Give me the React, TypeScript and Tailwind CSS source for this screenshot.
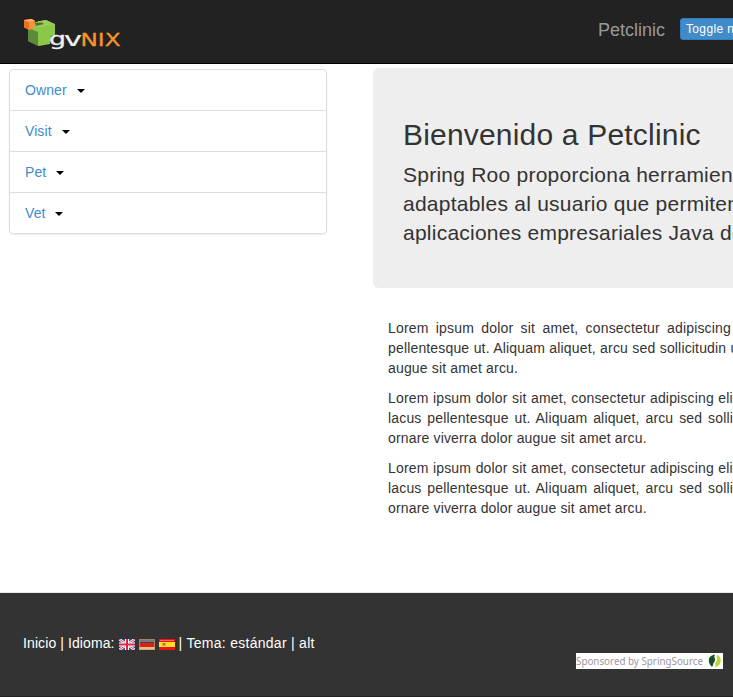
import type { ReactNode } from "react";

function Logo() {
  return (
    <svg className="shrink-0" width="100" height="34" viewBox="22 17 100 34" role="img" aria-label="gvNIX">
      <path d="M28 27 L36 22 L46 20 L55 24 V35 L51 36 L50 44 L39 46 L28 41 Z" fill="#8cc848" />
      <path d="M28 28 L38 32 V46 L28 41 Z" fill="#5a8a3a" />
      <path d="M37 21.5 L46 20 L55 24.5 L38 27.5 L33 25 L42 24 Z" fill="#9ccc58" />
      <path d="M35 23 L42 22.5 L44 24 L36 26 Z" fill="#4a7530" />
      <path d="M24 20 L32 19 L35 21 L34.5 28 L29 30 L24 27 Z" fill="#f7933a" />
      <path d="M24 20.5 L29 22 V30 L24 27.5 Z" fill="#e0752a" />
      <path d="M24 20 L31 19 L35 20.5 L29 22 Z" fill="#ffad62" />
      <g fontFamily="'DejaVu Sans', sans-serif" letterSpacing="0">
        <text x="49" y="45.3" fontSize="17.5" fill="#f0f0f0" stroke="#f0f0f0" strokeWidth=".3" textLength="17" lengthAdjust="spacingAndGlyphs">g</text>
        <text x="64" y="46" fontSize="19" fill="#f0f0f0" stroke="#f0f0f0" strokeWidth=".2" textLength="18" lengthAdjust="spacingAndGlyphs">v</text>
        <text x="80.5" y="46" fontSize="17.5" fill="#f7942e" stroke="#f7942e" strokeWidth=".3" textLength="40" lengthAdjust="spacingAndGlyphs">NIX</text>
      </g>
    </svg>
  );
}

function MenuItem({ label }: { label: string }) {
  return (
    <li className="flex h-[41px] items-center border-b border-[#ddd] pl-[15px] last:h-10 last:border-b-0">
      <a className="tracking-[0.08px] text-[#428bca]">{label}</a>
      <span className="mt-[2px] ml-[10px] border-x-4 border-t-4 border-x-transparent border-t-black" />
    </li>
  );
}

function UkFlag() {
  return (
    <svg width="16" height="11" viewBox="0 0 16 11">
      <rect width="16" height="11" fill="#1d4fa3" />
      <path d="M0 0L16 11M16 0L0 11" stroke="#fff" strokeWidth="2.6" />
      <path d="M0 0L16 11M16 0L0 11" stroke="#e2394c" strokeWidth="1" />
      <path d="M8 0V11M0 5.5H16" stroke="#fff" strokeWidth="4" />
      <path d="M8 0V11M0 5.5H16" stroke="#e0243a" strokeWidth="2" />
    </svg>
  );
}

function DeFlag() {
  return (
    <svg width="16" height="11" viewBox="0 0 16 11">
      <rect width="16" height="4" fill="#444" />
      <rect x="1" y="1" width="14" height="2" fill="#777" />
      <rect y="4" width="16" height="4" fill="#e01d1d" />
      <rect y="8" width="16" height="3" fill="#e3c478" />
      <rect x=".5" y=".5" width="15" height="10" fill="none" stroke="#b9a473" strokeOpacity=".7" />
    </svg>
  );
}

function EsFlag() {
  return (
    <svg width="16" height="11" viewBox="0 0 16 11">
      <rect width="16" height="11" fill="#e8131b" />
      <rect x="1" y="1" width="14" height="1" fill="#f66" />
      <rect y="3" width="16" height="5" fill="#fce11b" />
      <rect x="3" y="4" width="4" height="3" fill="#dba858" />
      <rect x="4" y="4" width="2" height="2" fill="#e75a35" />
    </svg>
  );
}

function Line({ spacing, children }: { spacing?: string; children: ReactNode }) {
  return <span className={`block whitespace-nowrap ${spacing ?? ""}`}>{children}</span>;
}

export default function App() {
  return (
    <div className="flex h-[697px] w-[733px] flex-col overflow-hidden bg-white font-['Liberation_Sans',Arial,sans-serif] text-[14px] leading-[20px] tracking-[0.16px] text-[#333]">
      <header className="flex h-16 shrink-0 border-b border-black bg-[#222] pt-[17px] pl-[22px]">
        <Logo />
        <span className="mt-[3px] ml-[476px] w-[82px] shrink-0 text-[18px] tracking-normal text-[#999]">Petclinic</span>
        <button className="mt-px h-[22px] shrink-0 rounded-[3px] border border-[#357ebd] bg-[#428bca] px-[5px] text-left text-[12px] leading-[18px] tracking-[0.35px] whitespace-nowrap text-white">
          Toggle navigation
        </button>
      </header>
      <div className="flex h-[528px] shrink-0">
        <ul className="mt-[5px] ml-[9px] h-[165px] w-[318px] shrink-0 rounded-[4px] border border-[#ddd] shadow-[0_1px_2px_rgba(0,0,0,0.075)]">
          <MenuItem label="Owner" />
          <MenuItem label="Visit" />
          <MenuItem label="Pet" />
          <MenuItem label="Vet" />
        </ul>
        <main className="ml-[46px] shrink-0">
          <section className="mt-1 h-[220px] w-[700px] rounded-[6px] bg-[#eee] pt-[50px] pl-[30px]">
            <h2 className="text-[30px] leading-[33px] tracking-[0.19px]">Bienvenido a Petclinic</h2>
            <p className="mt-[9px] text-[21px] leading-[29px] tracking-[0.24px]">
              <Line>Spring Roo proporciona herramientas</Line>
              <Line>adaptables al usuario que permiten</Line>
              <Line>aplicaciones empresariales Java de</Line>
            </p>
          </section>
          <section className="mt-[30px] flex flex-col gap-[10px] pl-[15px]">
            <p>
              <Line spacing="[word-spacing:3.3px]">Lorem ipsum dolor sit amet, consectetur adipiscing</Line>
              <Line spacing="[word-spacing:0.3px]">pellentesque ut. Aliquam aliquet, arcu sed sollicitudin ut</Line>
              <Line>augue sit amet arcu.</Line>
            </p>
            <p>
              <Line spacing="[word-spacing:0.45px]">Lorem ipsum dolor sit amet, consectetur adipiscing elit.</Line>
              <Line spacing="[word-spacing:1.8px]">lacus pellentesque ut. Aliquam aliquet, arcu sed sollicitudin</Line>
              <Line>ornare viverra dolor augue sit amet arcu.</Line>
            </p>
            <p>
              <Line spacing="[word-spacing:0.45px]">Lorem ipsum dolor sit amet, consectetur adipiscing elit.</Line>
              <Line spacing="[word-spacing:1.8px]">lacus pellentesque ut. Aliquam aliquet, arcu sed sollicitudin</Line>
              <Line>ornare viverra dolor augue sit amet arcu.</Line>
            </p>
          </section>
        </main>
      </div>
      <footer className="flex h-[105px] shrink-0 justify-between border-t border-[#e7e7e7] border-b border-b-[#222] bg-[#333] pr-[10px] pl-[23px] text-white">
        <div className="mt-[40px] flex h-5 items-center whitespace-pre">
          <span className="tracking-[0.1px]">Inicio | Idioma: </span>
          <span className="mt-[3px] mr-1 flex gap-1"><UkFlag /><DeFlag /><EsFlag /></span>
          <span className="tracking-[0.28px]">| Tema: estándar | alt</span>
        </div>
        <div className="mt-[60px] flex h-4 w-[147px] items-center justify-between bg-white pr-px">
          <svg width="132" height="16">
            <text x="0" y="12" fontSize="11" fill="#9c969c" letterSpacing="0" fontFamily="'Noto Sans', sans-serif" textLength="127" lengthAdjust="spacingAndGlyphs">Sponsored by SpringSource</text>
          </svg>
          <svg width="14" height="14" viewBox="0 0 14 14">
            <path d="M7.5 0.5 C0 1 -1 8 3.5 12.5 C4 12.8 5 12.5 5 11 C5 8.5 7.5 8 7 5 C6.5 3 5.5 2.5 7.5 0.5 Z" fill="#145220" />
            <path d="M9.5 1 C14.5 4 14 11 7 13.5 C8.5 11.5 6.5 10.5 7.5 8.5 C8.5 7 10 6 9 4 C8.5 3 8.5 1.5 9.5 1 Z" fill="#bdd62f" />
          </svg>
        </div>
      </footer>
    </div>
  );
}
